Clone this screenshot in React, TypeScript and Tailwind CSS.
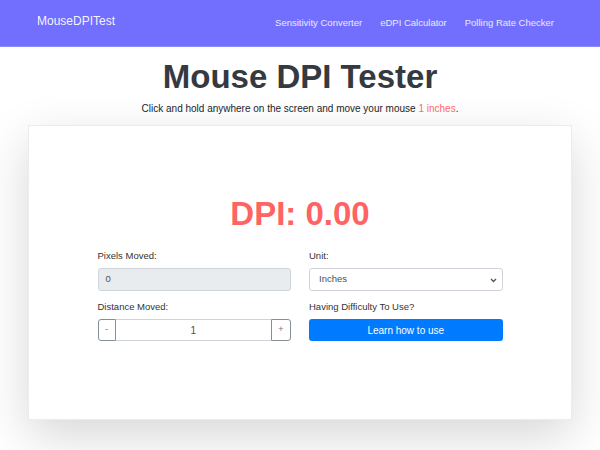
import React, { useState } from "react";

const navLinks = ["Sensitivity Converter", "eDPI Calculator", "Polling Rate Checker"];

function NavBar() {
  return (
    <nav className="h-[47px] bg-[#726efe] border-b border-[#8d8aff] flex items-center justify-between pl-[37px] pr-[46px]">
      <a className="text-[12px] text-white/95 -mt-[5px]">MouseDPITest</a>
      <div className="flex gap-[18px] mt-[1px]">
        {navLinks.map((l) => (
          <a key={l} className="text-[9.5px] text-white/85">
            {l}
          </a>
        ))}
      </div>
    </nav>
  );
}

export default function App() {
  const [unit, setUnit] = useState("Inches");
  const [distance, setDistance] = useState(1);
  const dpi = 0;

  return (
    <div className="min-h-[450px] bg-white font-['Liberation_Sans',Arial,sans-serif] text-[#212529]">
      <NavBar />
      <div className="flex flex-col items-center pt-[10px]">
        <h1 className="text-[33px] leading-[40px] font-bold text-[#343a40]">Mouse DPI Tester</h1>
        <p className="text-[10px] leading-[14px] mt-[5px]">
          Click and hold anywhere on the screen and move your mouse{" "}
          <span className="text-[#ff6b6b]">{distance} {unit.toLowerCase()}</span>.
        </p>
      </div>
      <div className="mx-[28px] mt-[9px] h-[295px] bg-white border border-[#ececec] shadow-[0_16px_46px_rgba(0,0,0,0.16)] flex flex-col items-center pt-[68px]">
        <div className="text-[33px] leading-[40px] font-bold text-[#ff6363]">DPI: {dpi.toFixed(2)}</div>
        <div className="grid grid-cols-2 gap-x-[18px] w-[405px] mt-[15px] text-[9.5px]">
          <div>
            <label className="block leading-[14px] mb-[5px] text-[#333]">Pixels Moved:</label>
            <div className="h-[23px] rounded-[3px] bg-[#e9ecef] border border-[#ced4da] flex items-center px-[7px] text-[#495057]">
              0
            </div>
          </div>
          <div>
            <label className="block leading-[14px] mb-[5px] text-[#333]">Unit:</label>
            <div className="relative h-[23px] rounded-[3px] bg-white border border-[#ced4da] flex items-center px-[9px] text-[#495057]">
              {unit}
              <svg
                className="absolute right-[5px] top-[9px]"
                width="7"
                height="5"
                viewBox="0 0 7 5"
                onClick={() => setUnit(unit === "Inches" ? "Centimeters" : "Inches")}
              >
                <path d="M1 1l2.5 2.5L6 1" fill="none" stroke="#555" strokeWidth="1.4" />
              </svg>
            </div>
          </div>
          <div className="mt-[9px]">
            <label className="block leading-[14px] mb-[5px] text-[#333]">Distance Moved:</label>
            <div className="flex h-[22px]">
              <button
                className="w-[18px] border border-[#868e96] rounded-l-[3px] text-[#6c757d] text-[9px] flex items-center justify-center"
                onClick={() => setDistance(Math.max(1, distance - 1))}
              >
                -
              </button>
              <div className="flex-1 border-y border-[#ced4da] flex items-center justify-center text-[10px] text-[#495057]">
                {distance}
              </div>
              <button
                className="w-[20px] border border-[#868e96] rounded-r-[3px] text-[#6c757d] text-[9px] flex items-center justify-center"
                onClick={() => setDistance(distance + 1)}
              >
                +
              </button>
            </div>
          </div>
          <div className="mt-[9px]">
            <label className="block leading-[14px] mb-[5px] text-[#333]">Having Difficulty To Use?</label>
            <button className="w-full h-[22px] rounded-[3px] bg-[#007bff] text-white text-[10px]">
              Learn how to use
            </button>
          </div>
        </div>
      </div>
    </div>
  );
}
